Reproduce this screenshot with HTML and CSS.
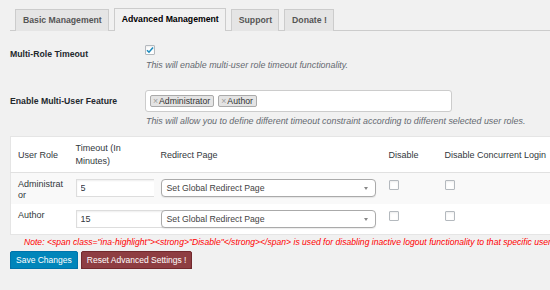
FILE: index.html
```html
<!DOCTYPE html>
<html lang="en">
<head>
    <meta charset="UTF-8">
    <meta name="viewport" content="width=device-width, initial-scale=1.0">
    <title>Inactive Logout - Advanced Management</title>
    <link rel="stylesheet" href="styles.css">
</head>
<body>
    <div class="wrap">
        <nav class="tabs">
            <a href="#" class="tab">Basic Management</a>
            <a href="#" class="tab active">Advanced Management</a>
            <a href="#" class="tab">Support</a>
            <a href="#" class="tab">Donate !</a>
        </nav>

        <div class="field first">
            <div class="field-label">Multi-Role Timeout</div>
            <div class="field-value">
                <span class="checkbox checked">
                    <svg width="8" height="8" viewBox="0 0 8 8"><path d="M1 4.2 L3 6.2 L7 1.6" fill="none" stroke="#1e8cbe" stroke-width="1.6"/></svg>
                </span>
                <p class="description">This will enable multi-user role timeout functionality.</p>
            </div>
        </div>

        <div class="field second">
            <div class="field-label">Enable Multi-User Feature</div>
            <div class="field-value">
                <div class="multi-select">
                    <span class="choice"><span class="remove">×</span>Administrator</span>
                    <span class="choice"><span class="remove">×</span>Author</span>
                </div>
                <p class="description">This will allow you to define different timeout constraint according to different selected user roles.</p>
            </div>
        </div>

        <table class="roles">
            <colgroup>
                <col style="width:58px">
                <col style="width:85px">
                <col style="width:228px">
                <col style="width:56px">
                <col style="width:140px">
            </colgroup>
            <thead>
                <tr>
                    <th>User Role</th>
                    <th>Timeout (In Minutes)</th>
                    <th>Redirect Page</th>
                    <th>Disable</th>
                    <th>Disable Concurrent Login</th>
                </tr>
            </thead>
            <tbody>
                <tr class="alt">
                    <td class="role">Administrator</td>
                    <td><input type="text" class="timeout" value="5"></td>
                    <td><span class="select-box">Set Global Redirect Page<span class="arrow"></span></span></td>
                    <td><span class="checkbox"></span></td>
                    <td><span class="checkbox"></span></td>
                </tr>
                <tr>
                    <td class="role">Author</td>
                    <td><input type="text" class="timeout" value="15"></td>
                    <td><span class="select-box">Set Global Redirect Page<span class="arrow"></span></span></td>
                    <td><span class="checkbox"></span></td>
                    <td><span class="checkbox"></span></td>
                </tr>
            </tbody>
        </table>

        <p class="note">Note: &lt;span class="ina-highlight"&gt;&lt;strong&gt;"Disable"&lt;/strong&gt;&lt;/span&gt; is used for disabling inactive logout functionality to that specific user role.</p>

        <div class="actions">
            <button class="button primary">Save Changes</button>
            <button class="button reset">Reset Advanced Settings !</button>
        </div>
    </div>
</body>
</html>
```

FILE: styles.css
```css
body {
    margin: 0;
    background: #f1f1f1;
    font-family: "Liberation Sans", Arial, sans-serif;
    color: #23282d;
    overflow: hidden;
}
.wrap {
    padding-left: 10px;
    width: 600px;
}

/* tabs */
.tabs {
    display: flex;
    align-items: flex-end;
    padding: 8px 0 0 5px;
    border-bottom: 1px solid #ccc;
    height: 22px;
    box-sizing: content-box;
}
.tab {
    margin-right: 5px;
    padding: 0 6px 0 7px;
    height: 21px;
    line-height: 21px;
    border: 1px solid #ccc;
    border-bottom: none;
    background: #e5e5e5;
    color: #555;
    font-size: 8.7px;
    font-weight: bold;
    text-decoration: none;
    margin-bottom: -1px;
}
.tab.active {
    background: #f1f1f1;
    color: #000;
    height: 22px;
}

/* settings rows */
.field {
    display: grid;
    grid-template-columns: 135px 1fr;
}
.field.first {
    margin-top: 14px;
}
.field.second {
    margin-top: 19px;
}
.field-label {
    font-size: 8.7px;
    font-weight: bold;
    line-height: 12px;
    padding-top: 3px;
}
.field.second .field-label {
    padding-top: 5px;
}
.description {
    margin: 4px 0 0 1px;
    font-size: 8.9px;
    font-style: italic;
    line-height: 12px;
    color: #646970;
}
.field.second .description {
    margin-top: 3px;
}

.checkbox {
    display: block;
    width: 10px;
    height: 10px;
    box-sizing: border-box;
    border: 1px solid #b4b9be;
    border-radius: 1px;
    background: #fff;
    box-shadow: inset 0 1px 2px rgba(0, 0, 0, 0.08);
}
.checkbox svg {
    display: block;
    margin: 0;
}

.multi-select {
    width: 307px;
    height: 22px;
    box-sizing: border-box;
    border: 1px solid #ccc;
    border-radius: 3px;
    background: #fff;
    display: flex;
    align-items: center;
    gap: 4px;
    padding-left: 4px;
}
.choice {
    height: 12px;
    line-height: 11px;
    box-sizing: border-box;
    padding: 0 3px 0 2px;
    border: 1px solid #aaa;
    border-radius: 2px;
    background: #e4e4e4;
    font-size: 8.7px;
    color: #333;
}
.remove {
    color: #999;
    margin-right: 1px;
}

/* role table */
.roles {
    margin-top: 9px;
    width: 567px;
    table-layout: fixed;
    border-collapse: collapse;
    background: #fff;
    border: 1px solid #e5e5e5;
    font-size: 9px;
    color: #32373c;
}
.roles th {
    text-align: left;
    font-weight: normal;
    line-height: 13px;
    padding: 5px 6px 4px 7px;
    vertical-align: middle;
    border-bottom: 1px solid #e1e1e1;
}
.roles td {
    padding: 6px 6px 6px 7px;
    vertical-align: top;
    line-height: 11px;
    overflow: visible;
}
.roles td.role {
    padding-right: 2px;
    padding-bottom: 3px;
    word-break: break-all;
}
.roles tr.alt td {
    background: #f9f9f9;
}
.roles td .checkbox {
    margin-top: 1px;
}
.timeout {
    display: block;
    width: 95px;
    height: 18px;
    box-sizing: border-box;
    margin: 0;
    padding: 0 4px;
    border: 1px solid #ddd;
    background: #fff;
    box-shadow: inset 0 1px 2px rgba(0, 0, 0, 0.07);
    font-family: "Liberation Sans", Arial, sans-serif;
    font-size: 9px;
    color: #32373c;
}
.select-box {
    position: relative;
    display: block;
    width: 215px;
    height: 18px;
    box-sizing: border-box;
    border: 1px solid #aaa;
    border-radius: 4px;
    background: #fff;
    padding-left: 5px;
    line-height: 16px;
    font-size: 8.7px;
    color: #444;
    box-shadow: 0 1px 1px rgba(0, 0, 0, 0.08);
}
.arrow {
    position: absolute;
    right: 7px;
    top: 7px;
    border-left: 2px solid transparent;
    border-right: 2px solid transparent;
    border-top: 3px solid #888;
}

.note {
    margin: 1px 0 0 14px;
    font-size: 8.6px;
    font-style: italic;
    line-height: 12px;
    color: #f00;
    white-space: nowrap;
}

.actions {
    display: flex;
    gap: 3px;
    margin-top: 3px;
}
.button {
    height: 18px;
    padding: 0 5px;
    border-radius: 2px;
    font-family: "Liberation Sans", Arial, sans-serif;
    font-size: 8.5px;
    color: #fff;
    cursor: pointer;
}
.button.primary {
    background: #0085ba;
    border: 1px solid #0073aa;
    box-shadow: 0 1px 0 #006799;
}
.button.reset {
    background: #8e3e42;
    border: 1px solid #72292d;
    box-shadow: 0 1px 0 #5e2225;
}
```
